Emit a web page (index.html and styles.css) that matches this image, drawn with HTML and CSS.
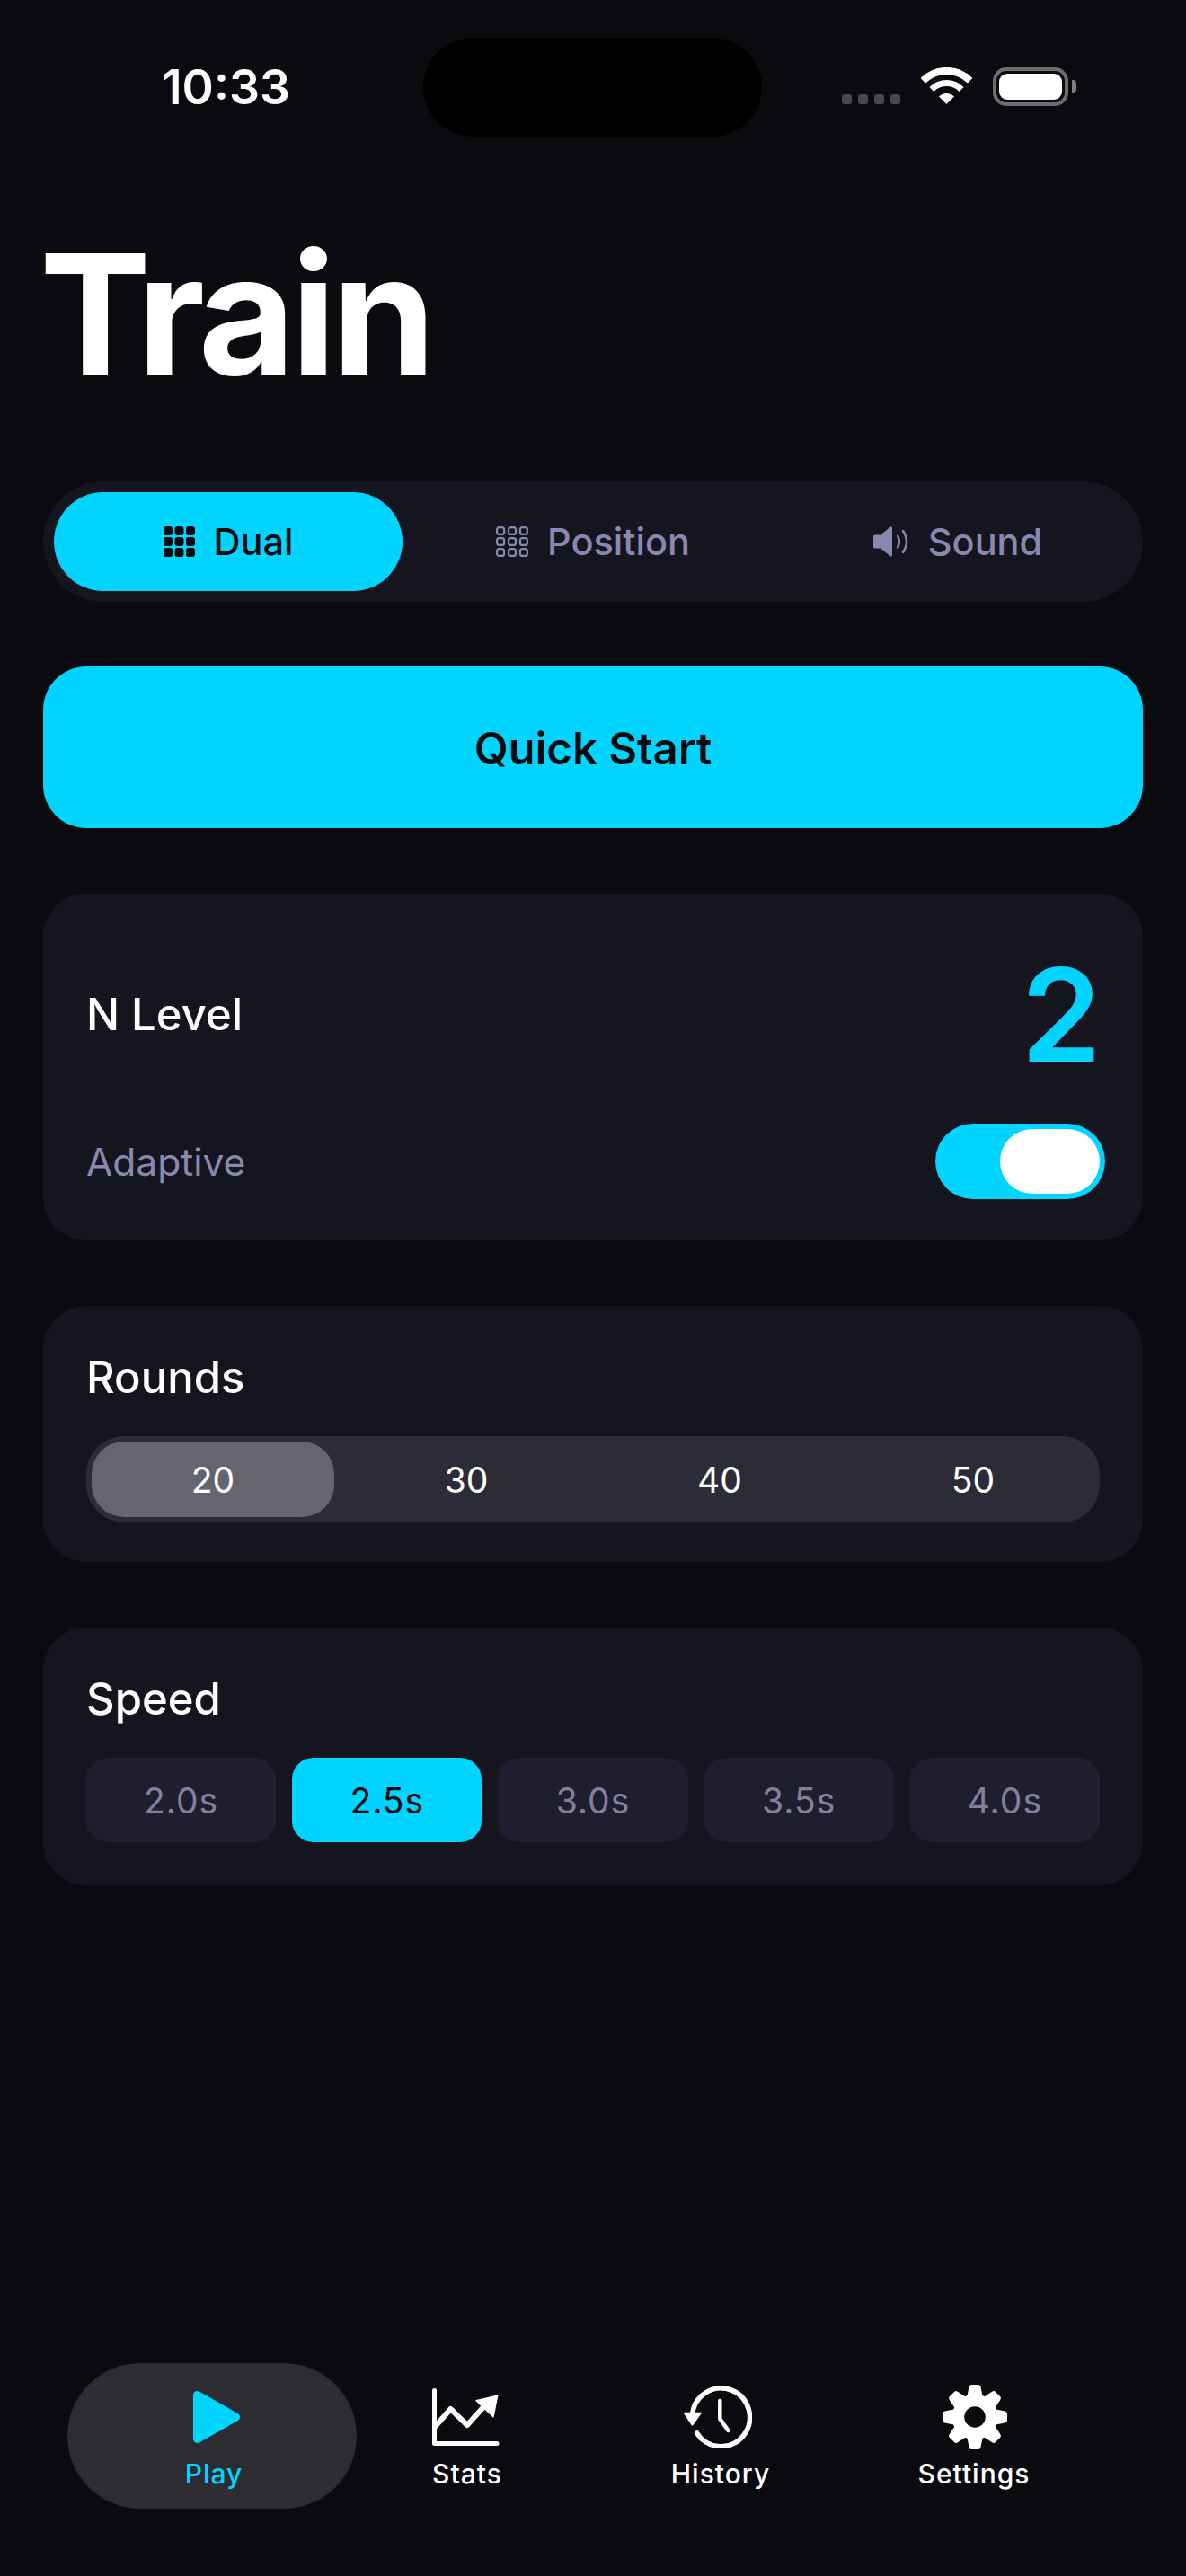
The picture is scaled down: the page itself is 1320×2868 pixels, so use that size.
FILE: index.html
```html
<!DOCTYPE html>
<html lang="en">
<head>
<meta charset="utf-8">
<title>Train</title>
<link rel="stylesheet" href="styles.css">
</head>
<body>
<div class="phone">
  <header class="status">
    <span class="time">10:33</span>
    <div class="island"></div>
    <div class="status-icons">
      <div class="cell"><i></i><i></i><i></i><i></i></div>
      <svg class="wifi" width="57" height="41" viewBox="0 0 57 41">
        <path d="M2.3 14.8A37 37 0 0 1 54.7 14.8" fill="none" stroke="#fff" stroke-width="8"/>
        <path d="M11.9 24.4A23.5 23.5 0 0 1 45.1 24.4" fill="none" stroke="#fff" stroke-width="7"/>
        <path d="M28.5 41L20 32.5A12 12 0 0 1 37 32.5Z" fill="#fff"/>
      </svg>
      <div class="battery"><div class="battery-fill"></div></div>
      <div class="battery-nub"></div>
    </div>
  </header>

  <main class="content">
    <h1 class="title">Train</h1>

    <div class="modes">
      <div class="mode mode-on">
        <svg width="35" height="34" viewBox="0 0 35 34" fill="#0a0a0f">
          <rect x="0" y="0" width="10" height="10" rx="3"/><rect x="12.500" y="0" width="10" height="10" rx="3"/><rect x="25" y="0" width="10" height="10" rx="3"/>
          <rect x="0" y="12" width="10" height="10" rx="3"/><rect x="12.500" y="12" width="10" height="10" rx="3"/><rect x="25" y="12" width="10" height="10" rx="3"/>
          <rect x="0" y="24" width="10" height="10" rx="3"/><rect x="12.500" y="24" width="10" height="10" rx="3"/><rect x="25" y="24" width="10" height="10" rx="3"/>
        </svg>
        <span>Dual</span>
      </div>
      <div class="mode">
        <svg width="36" height="34" viewBox="0 0 36 34" fill="none" stroke="#8a88ae" stroke-width="2.200">
          <rect x="1.100" y="1.100" width="8" height="7.800" rx="2.500"/><rect x="14" y="1.100" width="8" height="7.800" rx="2.500"/><rect x="26.900" y="1.100" width="8" height="7.800" rx="2.500"/>
          <rect x="1.100" y="13.100" width="8" height="7.800" rx="2.500"/><rect x="14" y="13.100" width="8" height="7.800" rx="2.500"/><rect x="26.900" y="13.100" width="8" height="7.800" rx="2.500"/>
          <rect x="1.100" y="25.100" width="8" height="7.800" rx="2.500"/><rect x="14" y="25.100" width="8" height="7.800" rx="2.500"/><rect x="26.900" y="25.100" width="8" height="7.800" rx="2.500"/>
        </svg>
        <span>Position</span>
      </div>
      <div class="mode">
        <svg width="40" height="34" viewBox="0 0 40 34">
          <path d="M1.500 9.500H8L19 .8Q21 0 21 2V32Q21 34 19 33.200L8 24.500H1.500Q0 24.500 0 23V11Q0 9.500 1.500 9.500Z" fill="#8a88ae"/>
          <path d="M27 10.500Q30.500 17 27 23.500" fill="none" stroke="#8a88ae" stroke-width="2.500" stroke-linecap="round"/>
          <path d="M33 5Q41 17 33 29" fill="none" stroke="#8a88ae" stroke-width="2.500" stroke-linecap="round"/>
        </svg>
        <span>Sound</span>
      </div>
    </div>

    <button class="quick">Quick Start</button>

    <section class="card card-level">
      <div class="row row-level">
        <span class="card-title">N Level</span>
        <span class="level">2</span>
      </div>
      <div class="row row-adaptive">
        <span class="adaptive">Adaptive</span>
        <div class="toggle"><div class="thumb"></div></div>
      </div>
    </section>

    <section class="card card-rounds">
      <div class="card-title">Rounds</div>
      <div class="rounds">
        <div class="round round-on">20</div>
        <div class="round">30</div>
        <div class="round">40</div>
        <div class="round">50</div>
      </div>
    </section>

    <section class="card">
      <div class="card-title">Speed</div>
      <div class="speeds">
        <div class="speed">2.0s</div>
        <div class="speed speed-on">2.5s</div>
        <div class="speed">3.0s</div>
        <div class="speed">3.5s</div>
        <div class="speed">4.0s</div>
      </div>
    </section>
  </main>

  <nav class="tabs">
    <div class="tab tab-on">
      <svg class="tab-icon icon-play" width="52" height="58" viewBox="0 0 52 58">
        <path d="M4.500 4.500L47.500 29L4.500 53.500Z" fill="#00d4ff" stroke="#00d4ff" stroke-width="9" stroke-linejoin="round"/>
      </svg>
      <span>Play</span>
    </div>
    <div class="tab">
      <svg class="tab-icon icon-stats" width="75" height="64" viewBox="0 0 75 64" fill="none" stroke="#fff">
        <path d="M2.500 2.500V61.500H72" stroke-width="5" stroke-linecap="round" stroke-linejoin="round"/>
        <path d="M3 43L20.500 23L39 41L57 21" stroke-width="6" stroke-linejoin="round"/>
        <path d="M49 13.700L72.600 8.300L68 31.700Z" fill="#fff" stroke-width="1.500" stroke-linejoin="round"/>
      </svg>
      <span>Stats</span>
    </div>
    <div class="tab">
      <svg class="tab-icon icon-history" width="77" height="70" viewBox="0 0 77 70" fill="none" stroke="#fff">
        <path d="M10.500 34A32 32.500 0 1 1 15.600 53" stroke-width="5.500" stroke-linecap="round"/>
        <path d="M1.500 30.500H20L10.500 44Z" fill="#fff" stroke-width="1.500" stroke-linejoin="round"/>
        <path d="M41.300 17V37L50.400 50" stroke-width="4.500" stroke-linecap="round" stroke-linejoin="round"/>
      </svg>
      <span>History</span>
    </div>
    <div class="tab">
      <svg class="tab-icon icon-gear" width="72" height="72" viewBox="0 0 72 72">
        <defs><path id="tooth" d="M27 15L29.500 2.500Q30 0 32 0H40Q42 0 42.500 2.500L45 15Z" fill="#fff"/></defs>
        <circle cx="36" cy="36" r="18.500" fill="none" stroke="#fff" stroke-width="13.500"/>
        <use href="#tooth"/>
        <use href="#tooth" transform="rotate(45 36 36)"/>
        <use href="#tooth" transform="rotate(90 36 36)"/>
        <use href="#tooth" transform="rotate(135 36 36)"/>
        <use href="#tooth" transform="rotate(180 36 36)"/>
        <use href="#tooth" transform="rotate(225 36 36)"/>
        <use href="#tooth" transform="rotate(270 36 36)"/>
        <use href="#tooth" transform="rotate(315 36 36)"/>
      </svg>
      <span>Settings</span>
    </div>
  </nav>
</div>
</body>
</html>
```

FILE: styles.css
```css
* { box-sizing: border-box; }
html, body { margin: 0; padding: 0; background: #0a0a0f; }
body { font-family: Inter, "Liberation Sans", sans-serif; color: #fff; }

.phone { width: 1320px; height: 2868px; display: flex; flex-direction: column; overflow: hidden; position: relative; }

.status { height: 194px; flex: none; position: relative; display: flex; justify-content: space-between; align-items: flex-start; padding: 64px 122px 0 180px; }
.time { font-size: 53.500px; font-weight: 600; line-height: 66px; width: 142px; white-space: nowrap; }
.island { position: absolute; left: 471px; top: 42px; width: 377px; height: 110px; border-radius: 55px; background: #000; }
.status-icons { display: flex; align-items: flex-end; margin-top: 11px; height: 43px; }
.cell { display: flex; gap: 7px; margin-right: 23px; margin-bottom: 2px; }
.cell i { width: 11px; height: 11px; border-radius: 3px; background: #48484e; display: block; }
.wifi { margin-right: 23px; margin-bottom: 2px; }
.battery { width: 84px; height: 43px; border: 4px solid #6e6e72; border-radius: 15px; padding: 3px; }
.battery-fill { width: 100%; height: 100%; background: #fff; border-radius: 9px; }
.battery-nub { width: 5px; height: 14px; background: #7e7e82; border-radius: 0 4px 4px 0; margin: 0 0 15px 4px; }

.content { padding: 0 48px; flex: none; }
.title { margin: 63px 0 0 -4px; font-size: 186px; line-height: 186px; font-weight: 700; letter-spacing: -5px; height: 186px; }

.modes { margin-top: 93px; height: 134px; background: #14151f; border-radius: 67px; padding: 12px; display: grid; grid-template-columns: repeat(3, 1fr); gap: 18px; align-items: stretch; }
.mode { display: flex; align-items: center; justify-content: center; gap: 21px; border-radius: 55px; font-size: 41.500px; font-weight: 500; color: #8a88ae; }
.mode-on { background: #00d4ff; color: #0a0a0f; }

.quick { display: block; width: 100%; margin: 72px 0 0; height: 180px; padding: 2px 0 0; border: 0; border-radius: 48px; background: #00d4ff; color: #0a0a0f; font: 600 49px Inter, "Liberation Sans", sans-serif; }

.card { margin-top: 73px; background: #14151f; border-radius: 48px; padding: 41px 48px 48px; }
.card-rounds { padding-bottom: 44px; }
.card-level { padding: 0 42px 0 48px; height: 386px; }
.card-title { font-size: 49px; font-weight: 500; line-height: 78px; color: #fff; display: block; }
.row { display: flex; justify-content: space-between; align-items: center; }
.row-level { height: 256px; padding-top: 14px; }
.level { font-size: 144px; line-height: 170px; font-weight: 600; color: #00d4ff; padding-right: 4px; }
.row-adaptive { height: 84px; }
.adaptive { font-size: 42.500px; color: #8a88ae; }
.toggle { width: 189px; height: 84px; background: #00d4ff; border-radius: 42px; padding: 6px; display: flex; justify-content: flex-end; }
.thumb { width: 111px; height: 72px; border-radius: 36px; background: #fff; }

.rounds { margin-top: 26px; height: 96px; background: #2c2c38; border-radius: 42px; padding: 6px; display: grid; grid-template-columns: repeat(4, 1fr); gap: 12px; }
.round { display: flex; align-items: center; justify-content: center; font-size: 39px; border-radius: 36px; color: #fff; }
.round-on { background: #65656f; }

.speeds { margin-top: 26px; display: grid; grid-template-columns: repeat(5, 1fr); gap: 18px; }
.speed { height: 94px; border-radius: 24px; background: #1e1e2e; color: #82809e; font-size: 39px; display: flex; align-items: center; justify-content: center; letter-spacing: 1px; }
.speed-on { background: #00d4ff; color: #0a0a0f; }

.tabs { margin-top: auto; margin-bottom: 75px; padding: 0 94px 0 97px; display: grid; grid-template-columns: repeat(4, 282px); height: 162px; }
.tab { position: relative; display: flex; flex-direction: column; align-items: center; font-size: 30px; font-weight: 500; letter-spacing: 1px; color: #fff; height: 162px; justify-content: flex-start; }
.tab > svg { position: relative; }
.tab > span { line-height: 40px; position: absolute; top: 103px; }
.icon-play { margin: 31px 0 0 5px; }
.icon-stats { margin: 28px 0 0 -3px; }
.icon-history { margin: 25px 0 0 -8px; }
.icon-gear { margin: 24px 0 0 1px; }
.tab-on { color: #00d4ff; }
.tab-on::before { content: ""; position: absolute; top: 0; bottom: 0; left: -22px; right: -18px; border-radius: 81px; background: #2c2c32; }
```
